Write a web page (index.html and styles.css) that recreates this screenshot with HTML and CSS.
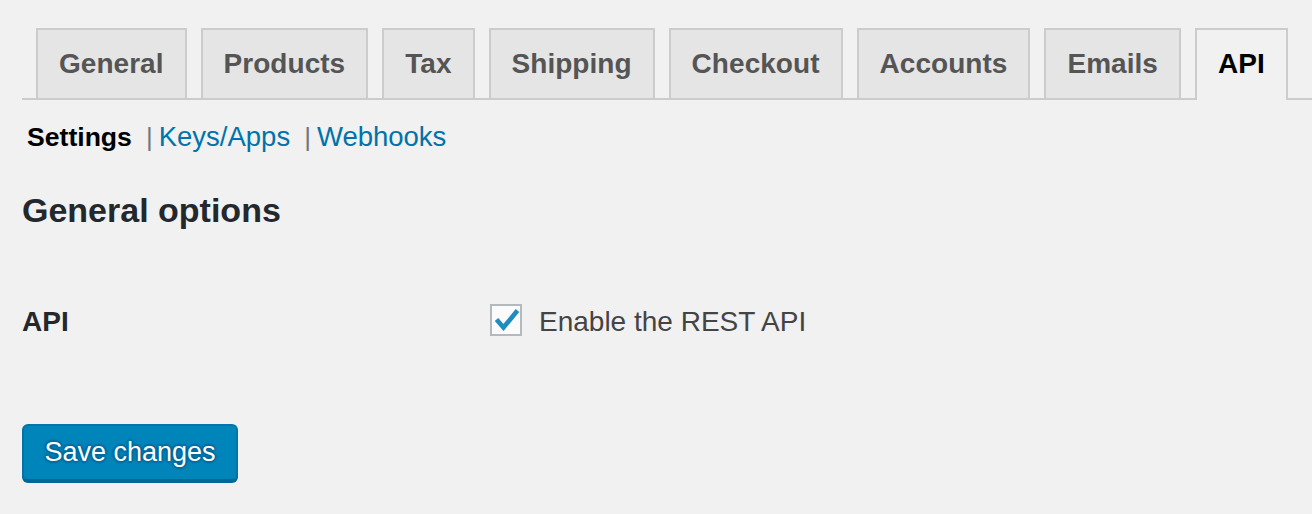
FILE: index.html
```html
<!DOCTYPE html>
<html lang="en">
<head>
<meta charset="utf-8">
<title>Settings - API</title>
<link rel="stylesheet" href="styles.css">
</head>
<body>
<div class="wrap">
  <nav class="tabs">
    <a class="tab">General</a>
    <a class="tab">Products</a>
    <a class="tab">Tax</a>
    <a class="tab">Shipping</a>
    <a class="tab">Checkout</a>
    <a class="tab">Accounts</a>
    <a class="tab">Emails</a>
    <a class="tab tab-active">API</a>
  </nav>
  <ul class="subnav">
    <li class="subnav-current">Settings</li>
    <li class="subnav-sep">|</li>
    <li class="subnav-link">Keys/Apps</li>
    <li class="subnav-sep">|</li>
    <li class="subnav-link">Webhooks</li>
  </ul>
  <h2 class="section-title">General options</h2>
  <div class="form-row">
    <div class="form-label">API</div>
    <label class="form-field">
      <span class="checkbox">
        <svg class="check" viewBox="0 0 32 32" width="32" height="32" aria-hidden="true">
          <polyline points="6.5,15.5 13.5,23.5 27.5,6.5" fill="none" stroke="#1e8cbe" stroke-width="4.6" stroke-linejoin="miter" stroke-linecap="butt"/>
        </svg>
      </span>
      <span class="field-text">Enable the REST API</span>
    </label>
  </div>
  <div class="actions">
    <button class="btn-primary" type="button">Save changes</button>
  </div>
</div>
</body>
</html>
```
FILE: styles.css
```css
html, body {
  margin: 0;
  padding: 0;
  background: #f1f1f1;
}
body {
  font-family: "Liberation Sans", Arial, sans-serif;
  color: #444;
  width: 1312px;
  height: 514px;
  overflow: hidden;
}
.wrap {
  padding: 28px 0 0 22px;
}
.tabs {
  display: flex;
  align-items: flex-start;
  border-bottom: 2px solid #ccc;
}
.tab {
  margin-left: 14px;
  padding: 10px 21px;
  border: 2px solid #ccc;
  border-bottom: none;
  background: #e5e5e5;
  color: #555;
  font-size: 28px;
  line-height: 48px;
  font-weight: 700;
  letter-spacing: 0.04px;
  white-space: nowrap;
  text-decoration: none;
}
.tab-active {
  background: #f1f1f1;
  color: #000;
  padding-bottom: 12px;
  margin-bottom: -2px;
}
.subnav {
  list-style: none;
  margin: 19px 0 0 5px;
  padding: 0;
  display: flex;
  font-size: 26px;
  line-height: 36px;
}
.subnav-current {
  color: #000;
  font-weight: 700;
  font-size: 26.6px;
}
.subnav-sep {
  color: #72777c;
  margin: 0 6px 0 14px;
}
.subnav-link {
  color: #0073aa;
  font-size: 27.5px;
}
.section-title {
  margin: 33px 0 0 0;
  font-size: 34px;
  line-height: 44px;
  font-weight: 700;
  color: #23282d;
}
.form-row {
  display: grid;
  grid-template-columns: 468px 1fr;
  grid-auto-rows: 40px;
  margin-top: 70px;
}
.form-label {
  font-size: 28px;
  font-weight: 700;
  color: #23282d;
  line-height: 40px;
}
.form-field {
  display: flex;
  align-items: flex-start;
  gap: 17px;
}
.checkbox {
  width: 32px;
  height: 32px;
  margin-top: 2px;
  box-sizing: border-box;
  border: 2px solid #b4b9be;
  background: #fbfbfb;
  position: relative;
  display: block;
}
.check {
  position: absolute;
  left: -2px;
  top: -2px;
}
.field-text {
  font-size: 28px;
  color: #444;
  line-height: 40px;
}
.actions {
  margin-top: 82px;
}
.btn-primary {
  width: 216px;
  height: 57px;
  box-sizing: border-box;
  background: #0085ba;
  border: 2px solid #0073aa;
  border-bottom-color: #006799;
  border-radius: 6px;
  box-shadow: 0 2px 0 #006799;
  color: #fff;
  font-family: "Liberation Sans", Arial, sans-serif;
  font-size: 27px;
  padding: 0;
  text-shadow: 0 -2px 2px #006799, 2px 0 2px #006799, 0 2px 2px #006799, -2px 0 2px #006799;
  cursor: pointer;
}
```
